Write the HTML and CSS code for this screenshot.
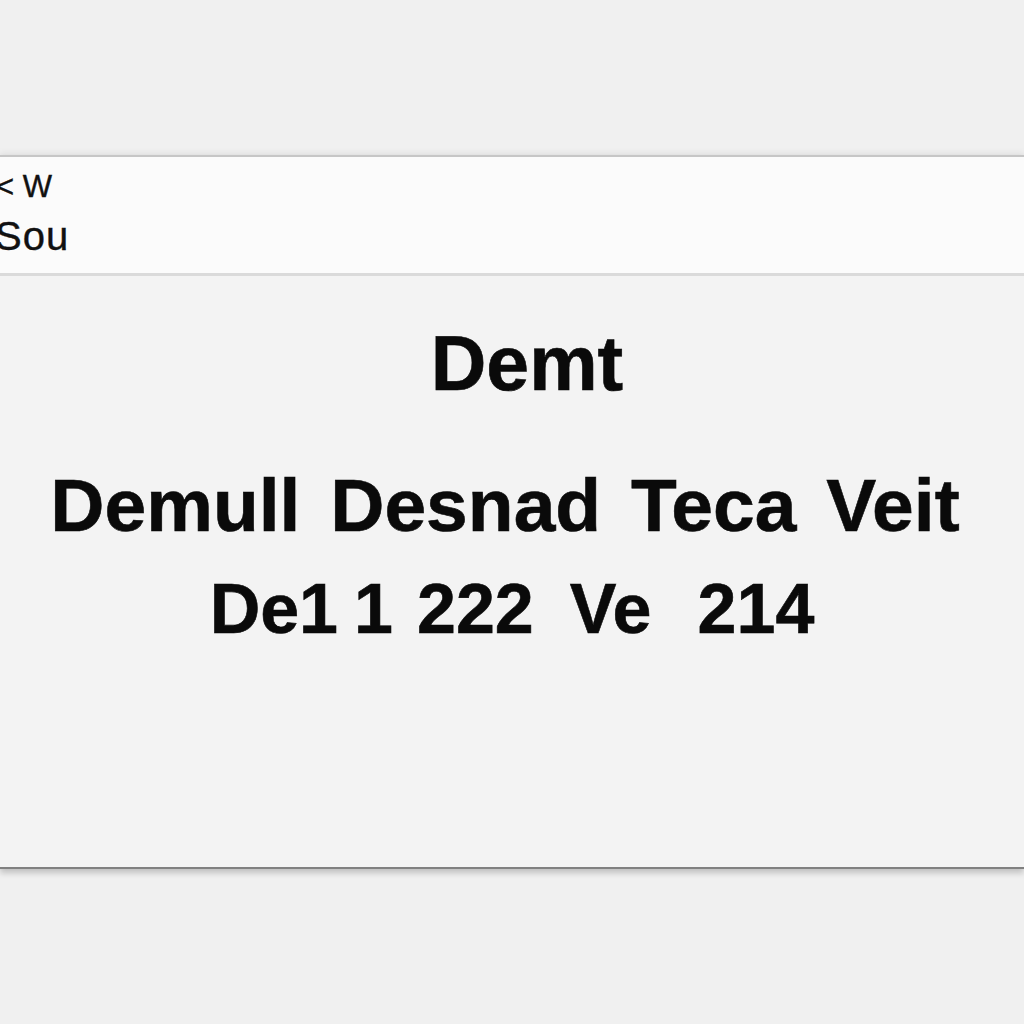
FILE: index.html
```html
<!DOCTYPE html>
<html>
<head>
<meta charset="utf-8">
<link rel="stylesheet" href="styles.css">
</head>
<body>
<div class="page">
  <div class="panel">
    <div class="topbar">
      <div class="nav">&lt; W</div>
      <div class="sub">Sou</div>
    </div>
    <div class="main">
      <div class="title">Demt</div>
      <div class="line2">Demull Desnad Teca Veit</div>
      <div class="line3">De1<span class="gap1"></span>1<span class="gap2"></span>222<span class="gap3"></span>Ve<span class="gap4"></span>214</div>
    </div>
  </div>
</div>
</body>
</html>
```

FILE: styles.css
```css
html, body {
  margin: 0;
  padding: 0;
  background: #f0f0f0;
  font-family: "Liberation Sans", Arial, sans-serif;
  color: #0a0a0a;
}
.page {
  width: 1024px;
  height: 1024px;
  padding-top: 155px;
  box-sizing: border-box;
  overflow: hidden;
}
.panel {
  border-top: 2px solid #c6c6c6;
  border-bottom: 2px solid #808080;
  box-shadow: 0 4px 6px rgba(0, 0, 0, 0.2), 0 -3px 6px rgba(0, 0, 0, 0.05);
}
.topbar {
  background: #fbfbfb;
  height: 119px;
  box-sizing: border-box;
  padding-top: 15px;
  border-bottom: 3px solid #dadada;
  overflow: hidden;
}
.nav {
  font-size: 31px;
  line-height: 30px;
  margin-left: -4px;
  color: #111;
  -webkit-text-stroke: 0.4px #111;
}
.sub {
  font-size: 40px;
  line-height: 40px;
  margin-top: 14px;
  margin-left: -5px;
  letter-spacing: 1px;
  color: #111;
  -webkit-text-stroke: 0.4px #111;
}
.main {
  background: #f3f3f3;
  height: 591px;
  box-sizing: border-box;
  padding-top: 49px;
  display: flex;
  flex-direction: column;
  align-items: center;
  font-weight: bold;
  -webkit-text-stroke: 0.6px #0a0a0a;
}
.title {
  font-size: 77px;
  line-height: 77px;
  padding-left: 30px;
}
.line2 {
  font-size: 75px;
  line-height: 78px;
  margin-top: 64px;
  word-spacing: 9px;
  padding-right: 14px;
}
.line3 {
  font-size: 70px;
  line-height: 70px;
  margin-top: 30px;
  display: flex;
  align-items: baseline;
}
.gap1 { width: 16px; }
.gap2 { width: 24px; }
.gap3 { width: 36px; }
.gap4 { width: 46px; }
```
